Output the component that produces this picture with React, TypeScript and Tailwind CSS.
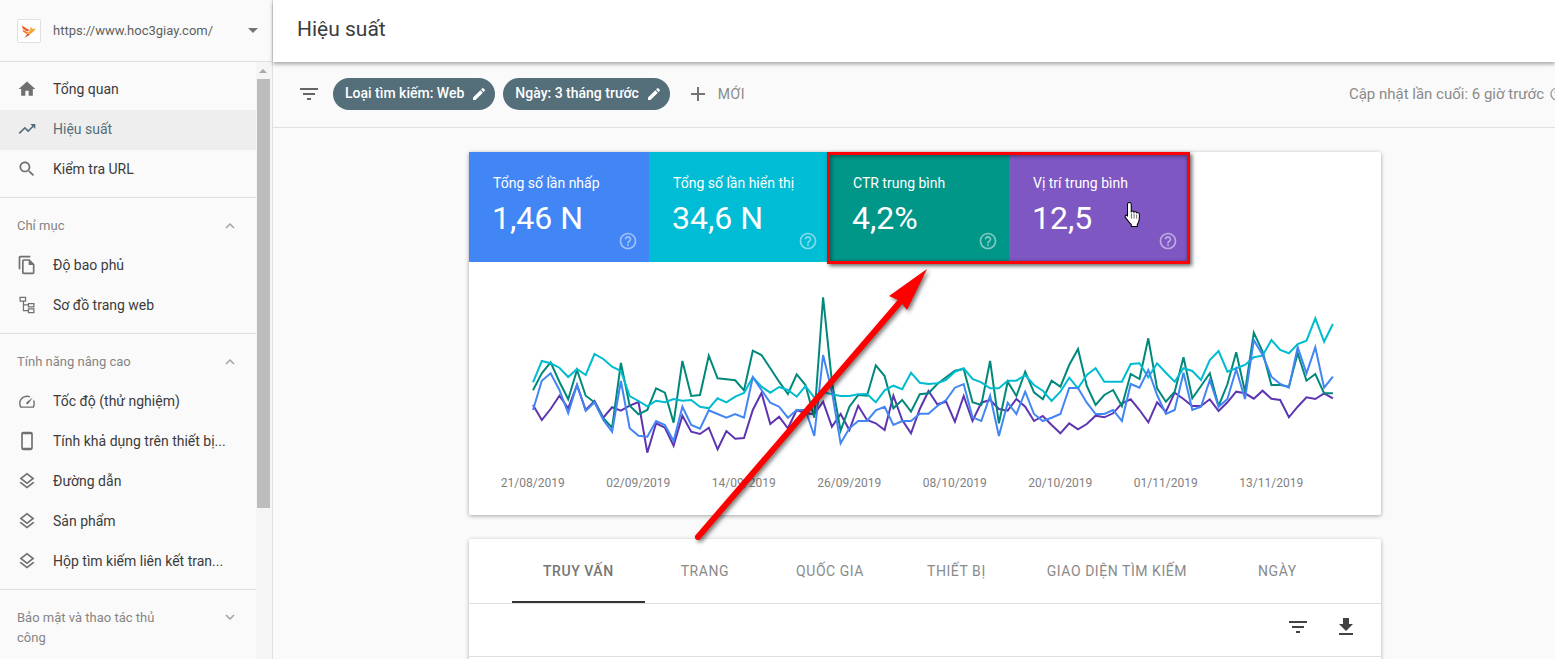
const font = { fontFamily: "Roboto, 'Noto Sans', sans-serif" };

const P = {
  home: "M10 20v-6h4v6h5v-8h3L12 3 2 12h3v8z",
  trend: "M16 6l2.29 2.29-4.88 4.88-4-4L2 16.59 3.41 18l6-6 4 4 6.3-6.29L22 12V6z",
  search: "M15.5 14h-.79l-.28-.27C15.41 12.59 16 11.11 16 9.5 16 5.91 13.09 3 9.5 3S3 5.91 3 9.5 5.91 16 9.5 16c1.61 0 3.09-.59 4.23-1.57l.27.28v.79l5 4.99L20.49 19l-4.99-5zm-6 0C7.01 14 5 11.99 5 9.5S7.01 5 9.5 5 14 7.01 14 9.5 11.99 14 9.5 14z",
  copy: "M16 1H4c-1.1 0-2 .9-2 2v14h2V3h12V1zm-1 4H8c-1.1 0-1.99.9-1.99 2L6 21c0 1.1.89 2 1.99 2H19c1.1 0 2-.9 2-2V11l-6-6zM8 21V7h6v5h5v9H8z",
  sitemap: "M3 2h8v6H8.500v3H13V9.500h8V15h-8v-2.500H8.500V18H13v-2h8v6h-8v-2.500H7V8H3V2zm1.500 1.500v3h5v-3h-5zm10 7.500v2.500h5V11h-5zm0 6.500v3h5v-3h-5z",
  speed: "M12 5.500C6.800 5.500 2.500 9.800 2.500 15c0 1.900.5 3.500 1.400 5h16.200c.9-1.500 1.400-3.100 1.400-5 0-1.500-.3-2.900-1-4.200l-1.300 1.300c.4.900.6 1.900.6 2.900 0 1.200-.3 2.400-.9 3.500H5.100c-.6-1.100-.9-2.300-.9-3.500 0-4.300 3.500-7.800 7.800-7.800 1 0 2 .2 2.900.6l1.300-1.300c-1.300-.7-2.700-1-4.200-1zm7 2.200-7.300 5.600c-.7.600-.8 1.600-.2 2.200.6.600 1.600.5 2.100-.2L19 7.700z",
  phone: "M7.500 1C6.100 1 5 2.100 5 3.500v17C5 21.900 6.100 23 7.500 23h9c1.400 0 2.500-1.100 2.500-2.500v-17C19 2.100 17.900 1 16.500 1h-9zM7 4h10v16H7V4z",
  layers: "M11.99 18.54l-7.37-5.73L3 14.07l9 7 9-7-1.63-1.27-7.38 5.74zM12 16l7.36-5.73L21 9l-9-7-9 7 1.63 1.27L12 16zm0-11.47L17.74 9 12 13.47 6.26 9 12 4.53z",
  up: "M12 8l-6 6 1.41 1.41L12 10.83l4.59 4.58L18 14z",
  down: "M16.59 8.59L12 13.17 7.41 8.59 6 10l6 6 6-6z",
  filter: "M10 18h4v-2h-4v2zM3 6v2h18V6H3zm3 7h12v-2H6v2z",
  edit: "M3 17.25V21h3.75L17.81 9.94l-3.75-3.75L3 17.25zM20.71 7.04c.39-.39.39-1.02 0-1.41l-2.34-2.34c-.39-.39-1.02-.39-1.41 0l-1.83 1.83 3.75 3.75 1.83-1.83z",
  plus: "M19 13h-6v6h-2v-6H5v-2h6V5h2v6h6v2z",
  help: "M11 18h2v-2h-2v2zm1-16C6.48 2 2 6.48 2 12s4.48 10 10 10 10-4.48 10-10S17.52 2 12 2zm0 18c-4.41 0-8-3.59-8-8s3.59-8 8-8 8 3.59 8 8-3.59 8-8 8zm0-14c-2.21 0-4 1.79-4 4h2c0-1.1.9-2 2-2s2 .9 2 2c0 2-3 1.75-3 5h2c0-2.25 3-2.5 3-5 0-2.21-1.79-4-4-4z",
  download: "M19 9h-4V3H9v6H5l7 7 7-7zM5 18v2h14v-2H5z",
};

function Icon({ d, className }: { d: string; className: string }) {
  return (
    <svg viewBox="0 0 24 24" fill="currentColor" className={className}>
      <path d={d} />
    </svg>
  );
}

function NavItem({ icon, label, active }: { icon: string; label: string; active?: boolean }) {
  return (
    <div className={active ? "flex h-10 items-center bg-[#eeeeee] pb-[2px] pl-[17px] text-[#546e7a]" : "flex h-10 items-center pb-[2px] pl-[17px] text-[#3c3c3c]"}>
      <Icon d={icon} className={active ? "h-5 w-5 shrink-0 text-[#546e7a]" : "h-5 w-5 shrink-0 text-[#707070]"} />
      <span className="ml-4 whitespace-nowrap text-[14px]">{label}</span>
    </div>
  );
}

function SectionLabel({ label, icon, two }: { label: string; icon: string; two?: boolean }) {
  return (
    <div className={two ? "flex items-start pl-[17px] pr-[17px] pt-[18px]" : "flex h-12 items-center pl-[17px] pr-[17px] pt-2"}>
      <span className={two ? "w-[165px] text-[13px] leading-5 text-[#858585]" : "w-[165px] text-[13px] text-[#858585]"}>{label}</span>
      <Icon d={icon} className="ml-auto h-[18px] w-[18px] text-[#a0a0a0]" />
    </div>
  );
}

function Sidebar() {
  return (
    <aside className="flex h-full w-[273px] shrink-0 flex-col border-r border-[#e0e0e0] bg-[#fafafa]">
      <div className="flex h-[62px] shrink-0 items-center border-b border-[#e0e0e0] pl-[17px] pr-[14px]">
        <div className="flex h-6 w-6 items-center justify-center rounded-[2px] border border-[#e0e0e0] bg-white">
          <svg viewBox="0 0 16 16" className="h-4 w-4">
            <path d="M1 2.500 6.500 6 9 7 6 8.500 1.500 5.500z" fill="#e8622c" />
            <path d="M1.500 6.500 6 9 8 8.500 5.500 11 2 8.500z" fill="#ee7a2a" />
            <path d="M15 5.500 11.500 6 9 3.500 9.500 7 6.500 10.500 8.500 11.500 12 9z" fill="#f4a52f" />
            <path d="M6.500 10.500 3.500 15 9 11.500z" fill="#d94f2b" />
          </svg>
        </div>
        <span className="ml-3 text-[13px] text-[#5f5f5f]">https://www.hoc3giay.com/</span>
        <svg viewBox="0 0 10 5" className="ml-auto h-[5px] w-[10px] text-[#757575]" fill="currentColor">
          <path d="M0 0h10L5 5z" />
        </svg>
      </div>
      <div className="flex min-h-0 flex-1 overflow-hidden">
        <nav className="w-[256px] shrink-0">
          <div className="border-b border-[#e0e0e0] pb-[7px] pt-2">
            <NavItem icon={P.home} label="Tổng quan" />
            <NavItem icon={P.trend} label="Hiệu suất" active />
            <NavItem icon={P.search} label="Kiểm tra URL" />
          </div>
          <div className="border-b border-[#e0e0e0] pb-[7px]">
            <SectionLabel label="Chỉ mục" icon={P.up} />
            <NavItem icon={P.copy} label="Độ bao phủ" />
            <NavItem icon={P.sitemap} label="Sơ đồ trang web" />
          </div>
          <div className="border-b border-[#e0e0e0] pb-[7px]">
            <SectionLabel label="Tính năng nâng cao" icon={P.up} />
            <NavItem icon={P.speed} label="Tốc độ (thử nghiệm)" />
            <NavItem icon={P.phone} label="Tính khả dụng trên thiết bị..." />
            <NavItem icon={P.layers} label="Đường dẫn" />
            <NavItem icon={P.layers} label="Sản phẩm" />
            <NavItem icon={P.layers} label="Hộp tìm kiếm liên kết tran..." />
          </div>
          <SectionLabel label="Bảo mật và thao tác thủ công" icon={P.down} two />
        </nav>
        <div className="flex w-4 flex-col items-start bg-[#f5f5f5]">
          <svg viewBox="0 0 8 4" className="ml-[3px] mt-[7px] h-1 w-2 text-[#a8a8a8]" fill="currentColor">
            <path d="M4 0l4 4H0z" />
          </svg>
          <div className="ml-[1px] mt-[6px] h-[429px] w-[13px] bg-[#bdbdbd]" />
        </div>
      </div>
    </aside>
  );
}

function Chip({ label }: { label: string }) {
  return (
    <div className="flex h-8 items-center rounded-2xl bg-[#546e7a] pl-3 pr-[8px] text-[14px] font-medium text-white">
      <span>{label}</span>
      <Icon d={P.edit} className="ml-[7px] h-4 w-4" />
    </div>
  );
}

function Tile({ label, value, color }: { label: string; value: string; color: string }) {
  return (
    <div className={"flex h-[110px] w-[180px] flex-col pl-6 pr-[11px] pt-[23px] text-white " + color}>
      <div className="text-[14px] leading-4">{label}</div>
      <div className="ml-[-1px] mt-[7px] text-[32px] leading-10">{value}</div>
      <Icon d={P.help} className="mt-[-7px] h-5 w-5 self-end text-white/50" />
    </div>
  );
}

const topY = (a: number[]) => a.map((y) => 285 + y / 3);
const lowY = (a: number[]) => a.map((y) => 300 + y / 3);

const cyan = [...topY([292,228,235,248,276,252,270,207,222,245,258,333,348,364,347,352,342,347,345,365,370,340,352,335,324,277,305,323,306,315,335,303,338,321,328,333,333,328,327,352,316,302,313,263]),
  ...lowY([248,252,250,240,215,205,237,247,265,265,242,242,225,255,272,303,275,233,265,225,205,245,245,245,192,190,232,190,218,245,205,213,240,180,153,215,205,195,172,167,120,150,160,132,122,55,125,72])];
const green = [...topY([316,265,232,290,343,255,332,352,400,428,234,362,388,375,310,323,413,228,333,330,212,280,283,286,316,197,210,250,290,327,268,300,398,37,290,437,365,330,332,241,273,370,345,380]),
  ...lowY([283,280,252,232,212,207,307,315,183,370,245,288,215,277,298,242,260,195,147,258,315,285,270,318,222,237,115,265,305,275,172,295,258,220,318,253,157,275,98,155,255,255,260,160,242,222,280,280])];
const blue = [...topY([375,287,265,315,385,300,378,352,405,440,288,430,452,455,408,420,468,365,420,431,376,387,398,387,398,277,315,353,365,398,375,375,453,210,320,475,430,408,408,376,365,420,408,408]),
  ...lowY([341,341,318,300,263,252,352,363,287,408,308,342,275,342,363,353,342,264,264,308,342,342,330,363,252,263,210,285,342,330,218,330,320,240,320,297,208,297,120,165,230,252,263,142,220,142,263,230])];
const purple = [...topY([360,405,372,332,370,300,375,348,398,367,377,362,351,503,415,428,482,392,440,447,428,493,438,461,459,375,324,417,395,430,375,385,388,350,425,387,435,362,405,415,435,332,405,445]),
  ...lowY([327,273,313,305,365,288,363,308,300,327,332,297,320,363,348,375,400,370,388,372,347,352,340,310,298,330,367,307,335,278,297,318,318,298,333,307,275,280,296,272,296,300,352,320,292,297,280,295])];

const pts = (ys: number[]) => ys.map((y, i) => (533 + i * 8.79).toFixed(1) + "," + y.toFixed(1)).join(" ");

function Chart() {
  const series = [
    { ys: purple, color: "#5e35b1" },
    { ys: green, color: "#00897b" },
    { ys: cyan, color: "#00bcd0" },
    { ys: blue, color: "#4285f4" },
  ];
  return (
    <svg viewBox="469 262 912 205" className="block h-[205px] w-[912px]">
      {series.map((s) => (
        <polyline key={s.color} points={pts(s.ys)} fill="none" stroke={s.color} strokeWidth="2" strokeLinejoin="miter" />
      ))}
    </svg>
  );
}

const dates = ["21/08/2019", "02/09/2019", "14/09/2019", "26/09/2019", "08/10/2019", "20/10/2019", "01/11/2019", "13/11/2019"];

function PerformanceCard() {
  return (
    <section className="ml-[196px] w-[912px] rounded-[2px] bg-white shadow-[0_1px_4px_rgba(0,0,0,0.35)]">
      <div className="flex">
        <Tile label="Tổng số lần nhấp" value="1,46 N" color="bg-[#4285f4]" />
        <Tile label="Tổng số lần hiển thị" value="34,6 N" color="bg-[#00bcd4]" />
        <Tile label="CTR trung bình" value="4,2%" color="bg-[#009688]" />
        <Tile label="Vị trí trung bình" value="12,5" color="bg-[#7e57c2]" />
      </div>
      <Chart />
      <div className="flex h-[48px] pl-[11px] pt-2 text-[12px] leading-4 text-[#808080]">
        {dates.map((d) => (
          <span key={d} className="w-[105.5px] text-center">{d}</span>
        ))}
      </div>
    </section>
  );
}

const tabs = [
  { label: "TRANG", cls: "ml-[5px] px-[31px]" },
  { label: "QUỐC GIA", cls: "ml-[5px] px-[31px]" },
  { label: "THIẾT BỊ", cls: "ml-[1px] px-[31px]" },
  { label: "GIAO DIỆN TÌM KIẾM", cls: "px-[30px]" },
  { label: "NGÀY", cls: "ml-[10px] px-[31px]" },
];

function TableCard() {
  return (
    <section className="ml-[196px] mt-6 w-[912px] rounded-[2px] bg-white shadow-[0_1px_4px_rgba(0,0,0,0.3)]">
      <div className="flex h-[65px] border-b border-[#e0e0e0] pl-[43px] text-[14px] tracking-[0.55px]">
        <div className="flex h-[64px] items-center border-b-2 border-[#333333] px-[31px] pt-[3px] font-medium text-[#757575]">TRUY VẤN</div>
        {tabs.map((t) => (
          <div key={t.label} className={"flex h-[64px] items-center pt-[1px] text-[#8a8a8a] " + t.cls}>{t.label}</div>
        ))}
      </div>
      <div className="flex h-[53px] items-center justify-end gap-6 border-b border-[#e0e0e0] pb-[6px] pr-[23px] text-[#424242]">
        <Icon d={P.filter} className="h-6 w-6" />
        <Icon d={P.download} className="h-6 w-6" />
      </div>
      <div className="h-10" />
    </section>
  );
}

function Annotations() {
  return (
    <>
      <div className="absolute left-[827px] top-[152px] h-[112px] w-[363px] border-[3px] border-[#ff0000] shadow-[2px_2px_4px_rgba(0,0,0,0.6),inset_1px_1px_4px_rgba(0,0,0,0.45)]" />
      <svg viewBox="680 255 270 300" className="absolute left-[680px] top-[255px] h-[300px] w-[270px] drop-shadow-[2px_2px_2px_rgba(0,0,0,0.55)]">
        <line x1="698" y1="537" x2="900" y2="302" stroke="#ff0000" strokeWidth="6" strokeLinecap="round" />
        <path d="M927 269L907 310 900 301 889 296z" fill="#ff0000" />
      </svg>
      <svg viewBox="0 0 16 24" className="absolute left-[1124px] top-[202px] h-[25px] w-[17px]">
        <path
          d="M5 .5c1 0 1.800.7 1.800 1.800V9.200c.6-.8 2.400-.7 2.600.5.6-.7 2.400-.5 2.600.7.6-.5 2.300-.2 2.500 1.100.2 1.500.1 4.500-.3 6.500-.3 1.500-1.200 2.700-1.600 3.500v2H6.800v-1.900C5.500 20.500 3.500 18 1.200 14.800c-1-1.400.6-2.800 1.800-1.800l.2.200V2.300C3.200 1.200 4 .5 5 .5z"
          fill="#ffffff"
          stroke="#000000"
          strokeWidth="1"
        />
        <path d="M7 11v5M9.500 11v5M12 12v4" stroke="#555555" strokeWidth="0.8" fill="none" />
      </svg>
    </>
  );
}

export default function App() {
  return (
    <div className="relative flex h-[659px] w-[1555px] overflow-hidden bg-[#fafafa]" style={font}>
      <Sidebar />
      <main className="flex min-w-0 flex-1 flex-col">
        <header className="relative z-10 flex h-[62px] shrink-0 items-center bg-white pb-[2px] pl-6 text-[21px] text-[#3c3c3c] shadow-[0_2px_4px_rgba(0,0,0,0.35)]">
          Hiệu suất
        </header>
        <div className="flex h-[66px] shrink-0 items-center border-b border-[#e0e0e0] pb-[2px] pl-[24px] pr-0">
          <Icon d={P.filter} className="h-6 w-6 text-[#666666]" />
          <div className="ml-3 flex items-center gap-2">
            <Chip label="Loại tìm kiếm: Web" />
            <Chip label="Ngày: 3 tháng trước" />
          </div>
          <Icon d={P.plus} className="ml-4 h-6 w-6 text-[#757575]" />
          <span className="ml-2 pt-[2px] text-[14px] tracking-[0.5px] text-[#8a8a8a]">MỚI</span>
          <span className="ml-auto pt-[2px] text-[15px] text-[#8a8a8a]">Cập nhật lần cuối: 6 giờ trước</span>
          <Icon d={P.help} className="ml-[5px] mr-[-10px] h-[16px] w-[16px] shrink-0 text-[#9a9a9a]" />
        </div>
        <div className="pt-6">
          <PerformanceCard />
          <TableCard />
        </div>
      </main>
      <Annotations />
    </div>
  );
}
